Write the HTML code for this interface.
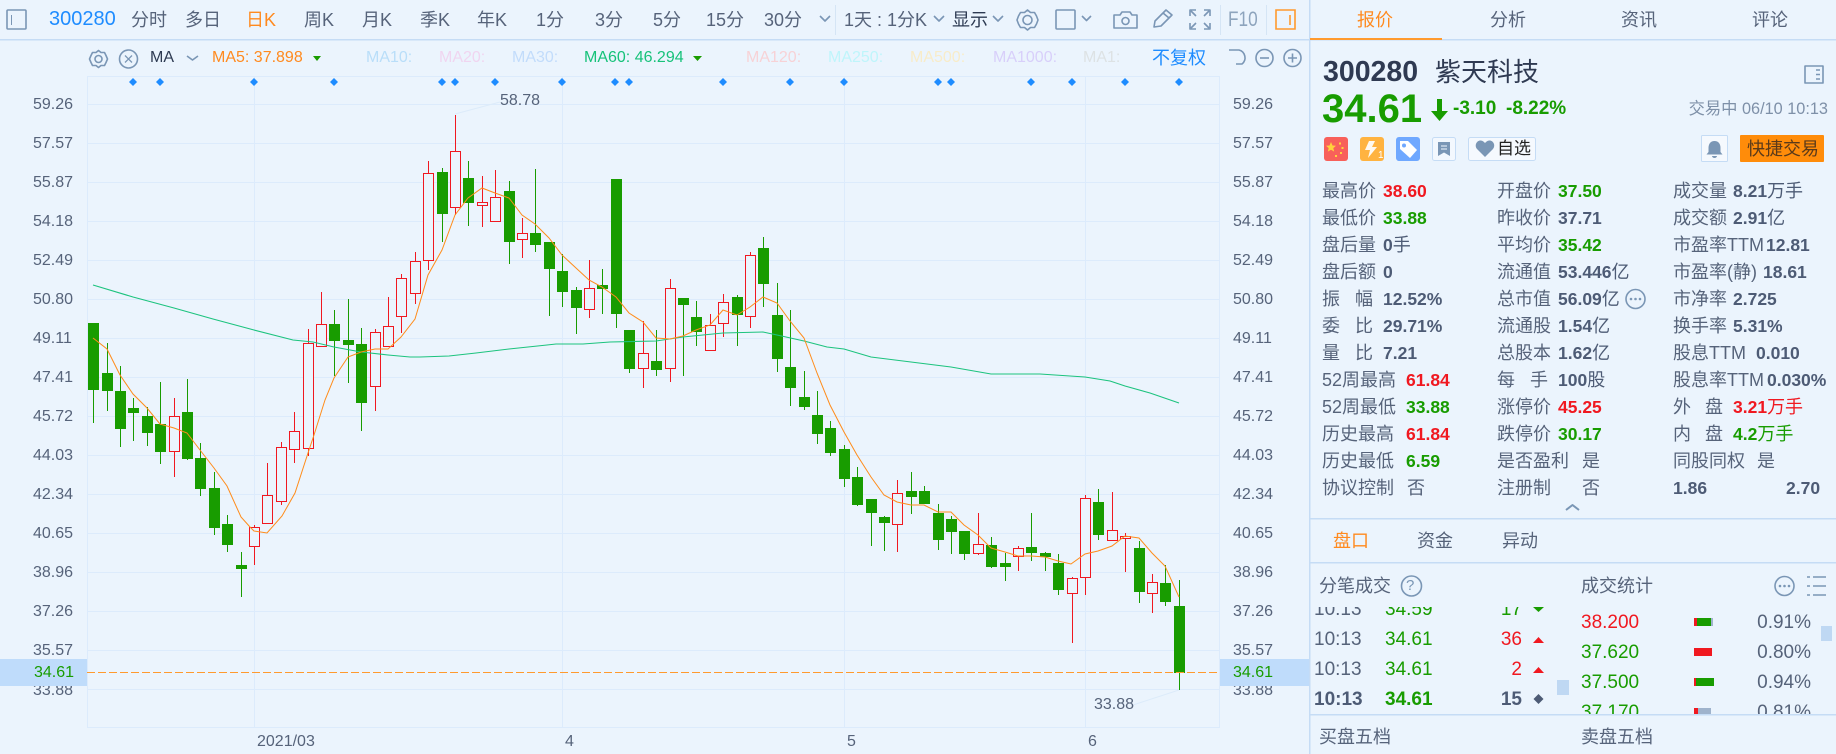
<!DOCTYPE html>
<html lang="zh-CN"><head><meta charset="utf-8"><title>300280 紫天科技</title>
<style>
html,body{margin:0;padding:0;background:#ebf4fd}
#p{position:relative;width:1836px;height:754px;overflow:hidden;background:#ebf4fd;font-family:"Liberation Sans","Noto Sans CJK SC",sans-serif;color:#56637a}
.a{position:absolute;white-space:nowrap;line-height:24px;font-size:18px}
.s{font-size:16px}
.b{font-weight:700;font-size:17.5px}
.g{color:#189c00}.r{color:#f01820}.d{color:#4d5b75}
.n{font-weight:400;font-size:18px}
svg{position:absolute;left:0;top:0}
.t{font-size:19px}
#c{position:absolute;left:0;top:607px;width:1836px;height:107px;overflow:hidden}
#c i{position:absolute;height:8px;display:block}
</style></head><body><div id="p">

<svg width="1836" height="754" viewBox="0 0 1836 754" fill="none" shape-rendering="crispEdges">
<!-- price bands -->
<rect x="0" y="659" width="87" height="27" fill="#bfdcfb"/>
<rect x="1219" y="659" width="90" height="27" fill="#bfdcfb"/>
<!-- structural lines -->
<path d="M0 39.5H1836" stroke="#c5dcf5" stroke-width="1.5"/>
<path d="M1309.5 0V754" stroke="#c5dcf5" stroke-width="1.5"/>
<path d="M1310 39H1442" stroke="#ff9a2e" stroke-width="2"/>
<path d="M1310 518.5H1836M1310 562.5H1836M1310 714.5H1836" stroke="#c5dcf5" stroke-width="1.5"/>
<path d="M835.5 5V35M1220.5 5V35M1266.5 5V35" stroke="#d5e5f5"/>
<!-- grid -->
<path d="M87.5 76.5H1219.5V727.5H87.5ZM87 104.5H1219M87 143.5H1219M87 182.5H1219M87 221.5H1219M87 260.5H1219M87 299.5H1219M87 338.5H1219M87 377.5H1219M87 416.5H1219M87 455.5H1219M87 494.5H1219M87 533.5H1219M87 572.5H1219M87 611.5H1219M87 650.5H1219M87 689.5H1219M254.5 76V727M562.5 76V727M844.5 76V727M1085.5 76V727" stroke="#dcebfc"/>
<!-- green candles -->
<path stroke="#189c00" d="M93.5 323V423M107.5 343V411M120.5 366V447M133.5 398V441M147.5 407V446M160.5 382V464M187.5 379V460M200.5 443V496M214.5 472V535M227.5 515V552M241.5 552V597M334.5 310V376M348.5 299V383M361.5 328V431M442.5 168V242M468.5 161V226M509.5 181V264M535.5 169V252M549.5 242V316M562.5 254V307M576.5 287V334M602.5 269V314M616.5 179V328M629.5 330V373M656.5 330V376M683.5 298V376M696.5 301V346M737.5 295V346M763.5 237V307M777.5 283V372M790.5 310V406M804.5 371V410M817.5 391V444M830.5 421V456M844.5 445V487M857.5 467V506M871.5 499V546M884.5 516V551M911.5 472V514M924.5 486V504M938.5 504V550M951.5 516V554M964.5 531V560M991.5 537V568M1005.5 553V581M1031.5 513V561M1045.5 552V571M1058.5 554V595M1098.5 489V540M1139.5 541V603M1165.5 565V606M1179.5 580V690"/>
<path fill="#189c00" d="M88 323h11V390h-11zM102 373h11V391h-11zM115 391h11V429h-11zM128 408h11V413h-11zM142 416h11V433h-11zM155 424h11V452h-11zM182 412h11V459h-11zM195 458h11V489h-11zM209 488h11V528h-11zM222 524h11V545h-11zM236 565h11V569h-11zM329 324h11V341h-11zM343 340h11V345h-11zM356 344h11V403h-11zM437 172h11V214h-11zM463 178h11V203h-11zM504 191h11V242h-11zM530 233h11V245h-11zM544 242h11V269h-11zM557 271h11V292h-11zM571 290h11V308h-11zM597 285h11V289h-11zM611 179h11V314h-11zM624 330h11V369h-11zM651 361h11V370h-11zM678 298h11V305h-11zM691 317h11V332h-11zM732 297h11V315h-11zM758 248h11V284h-11zM772 315h11V359h-11zM785 367h11V388h-11zM799 397h11V407h-11zM812 415h11V434h-11zM825 428h11V453h-11zM839 449h11V479h-11zM852 477h11V505h-11zM866 499h11V513h-11zM879 517h11V523h-11zM906 491h11V497h-11zM919 491h11V504h-11zM933 513h11V540h-11zM946 519h11V532h-11zM959 531h11V554h-11zM986 545h11V567h-11zM1000 563h11V567h-11zM1026 547h11V553h-11zM1040 553h11V557h-11zM1053 563h11V590h-11zM1093 502h11V535h-11zM1134 548h11V592h-11zM1160 583h11V602h-11zM1174 606h11V673h-11z"/>
<!-- red candles -->
<path stroke="#f01820" d="M174.5 398V477M254.5 525V565M267.5 463V524M281.5 442V505M294.5 412V463M308.5 329V456M321.5 292V347M375.5 329V411M388.5 297V347M401.5 274V333M415.5 252V304M428.5 161V270M455.5 115V215M482.5 176V227M495.5 170V222M522.5 218V258M589.5 260V318M643.5 321V388M670.5 279V382M710.5 314V351M723.5 294V337M750.5 252V328M897.5 480V552M978.5 513V555M1018.5 546V571M1072.5 577V643M1085.5 495V595M1112.5 492V541M1125.5 533V572M1152.5 574V613"/>
<path stroke="#f01820" fill="#ebf4fd" d="M169.5 416.5h10V451.5h-10zM249.5 527.5h10V546.5h-10zM262.5 495.5h10V523.5h-10zM276.5 447.5h10V501.5h-10zM289.5 431.5h10V449.5h-10zM303.5 343.5h10V448.5h-10zM316.5 324.5h10V346.5h-10zM370.5 332.5h10V386.5h-10zM383.5 326.5h10V346.5h-10zM396.5 278.5h10V316.5h-10zM410.5 261.5h10V293.5h-10zM423.5 173.5h10V260.5h-10zM450.5 151.5h10V207.5h-10zM477.5 202.5h10V205.5h-10zM490.5 197.5h10V221.5h-10zM517.5 233.5h10V239.5h-10zM584.5 288.5h10V309.5h-10zM638.5 353.5h10V368.5h-10zM665.5 288.5h10V368.5h-10zM705.5 325.5h10V350.5h-10zM718.5 302.5h10V323.5h-10zM745.5 255.5h10V316.5h-10zM892.5 493.5h10V524.5h-10zM973.5 544.5h10V553.5h-10zM1013.5 548.5h10V556.5h-10zM1067.5 578.5h10V593.5h-10zM1080.5 498.5h10V577.5h-10zM1107.5 530.5h10V540.5h-10zM1120.5 536.5h10V538.5h-10zM1147.5 582.5h10V593.5h-10z"/>
<!-- dashed last price -->
<path d="M87 672.5H1219" stroke="#ff9a2e" stroke-dasharray="8 3"/>
</svg>

<svg width="1836" height="754" viewBox="0 0 1836 754" fill="none">
<!-- MA60 -->
<path stroke="#1cc37e" stroke-width="1.1" d="M93 285L133 297L174 308L213 319L254 330L293 340L313 342L334 347L361 352L388 355L410 357L420 357L449 356L476 353L509 349L547 345L556 344L583 344L610 342L656 341L683 337L723 333L763 332L777 335L804 341L827 347L844 349L871 357L911 362L951 367L991 374L1000 374L1040 374L1085 377L1110 381L1125 386L1150 393L1179 403"/>
<!-- MA5 -->
<path stroke="#ff8c1a" stroke-width="1" d="M93 338L107 349L120 375L133 394L147 408L160 424L174 428L187 433L200 450L214 468L227 486L241 517L250 527L254 531L267 533L282 516L295 493L308 453L314 435L325 400L334 378L348 357L361 352L375 349L388 349L401 337L415 319L428 275L442 250L455 215L468 198L482 188L495 193L509 198L522 215L535 224L549 238L562 255L576 268L589 280L602 287L616 297L629 313L643 322L656 338L670 339L683 336L696 330L710 325L723 310L737 315L750 307L763 297L777 303L790 321L804 338L817 373L830 405L844 432L857 455L871 477L884 495L897 502L911 505L924 505L938 512L951 512L964 525L978 535L991 548L1005 552L1018 556L1031 556L1045 557L1058 561L1071 564L1085 554L1098 551L1112 546L1125 536L1139 538L1152 553L1165 566L1179 597"/>
<!-- leaders -->
<path stroke="#dcebfa" d="M455 114L500 102M1133 705L1179 690"/>
<!-- diamonds -->
<path fill="#1e8cff" d="M133 78l4 4-4 4-4-4zM160 78l4 4-4 4-4-4zM254 78l4 4-4 4-4-4zM334 78l4 4-4 4-4-4zM442 78l4 4-4 4-4-4zM455 78l4 4-4 4-4-4zM495 78l4 4-4 4-4-4zM562 78l4 4-4 4-4-4zM615 78l4 4-4 4-4-4zM629 78l4 4-4 4-4-4zM723 78l4 4-4 4-4-4zM790 78l4 4-4 4-4-4zM844 78l4 4-4 4-4-4zM938 78l4 4-4 4-4-4zM951 78l4 4-4 4-4-4zM1031 78l4 4-4 4-4-4zM1072 78l4 4-4 4-4-4zM1125 78l4 4-4 4-4-4zM1179 78l4 4-4 4-4-4z"/>

<!-- toolbar icons -->
<g stroke="#7a96b5" stroke-width="1.6" stroke-linejoin="round">
<rect x="7" y="10" width="19" height="19" rx="1"/><path stroke-width="1" d="M11.5 15V25"/>
<path d="M820 16l5 5 5-5M934 16l5 5 5-5M993 16l5 5 5-5M1082 16l4.500 4.500 4.500-4.500M187 56l5.500 4 5.500-4"/>
<!-- gear top -->
<path d="M1027.500 10l3 2.500 4 0 2 3.500 1.500 4-1.500 4-2 3.500-4 0-3 2.500-3-2.500-4 0-2-3.500-1.500-4 1.500-4 2-3.500 4 0z"/><circle cx="1027.500" cy="20" r="4.500"/>
<rect x="1056" y="10" width="19" height="19" rx="1"/>
<!-- camera -->
<path d="M1114 15h6l2-3h8l2 3h5v13h-23z"/><circle cx="1125.500" cy="21" r="3.500"/>
<!-- pencil -->
<path d="M1154 27l1-6 11-11 6 5-11 11zM1163 13l6 5"/>
<!-- fullscreen -->
<path d="M1190 16v-6h6M1210 16v-6h-6M1190 23v6h6M1210 23v6h-6M1191 11l5 5M1209 11l-5 5M1191 28l5-5M1209 28l-5-5"/>
<!-- row 2 left icons -->
<path d="M98.500 50.500l2.500 2 3.500 0 1.500 3 1.500 3.500-1.500 3.500-1.500 3-3.500 0-2.500 2-2.500-2-3.500 0-1.500-3-1.500-3.500 1.500-3.500 1.500-3 3.500 0z"/><circle cx="98.500" cy="59" r="3.500"/>
<circle cx="128.500" cy="59" r="9"/><path stroke-width="1.3" d="M125 55.500l7 7M132 55.500l-7 7"/>
<!-- undo, minus, plus -->
<path d="M1229 50h10a8 8 0 0 1 3 14h-6"/>
<circle cx="1264.500" cy="58" r="8.500"/><path d="M1260 58h9"/>
<circle cx="1292.500" cy="58" r="8.500"/><path d="M1288 58h9M1292.500 53.500v9"/>
<!-- panel icon -->
<rect x="1805" y="66" width="18" height="17"/><path d="M1816 70h4M1816 74.500h4M1816 79h4"/>
<!-- ellipsis circles -->
<circle cx="1635.500" cy="299" r="9.500"/>
<circle cx="1784.500" cy="586" r="9.500"/>
<circle cx="1411.500" cy="586" r="10"/>
<!-- list icon -->
<path d="M1807 577h3M1813 577h13M1807 586h3M1813 586h13M1807 595h3M1813 595h13"/>
<!-- up chevron -->
<path stroke-width="2" d="M1566 510l6.500-5 6.500 5"/>
</g>
<path stroke="#ff9a2e" stroke-width="1.6" d="M1276 10h19v19h-19zM1290 15v10"/>
<path fill="#1a9c00" d="M313 56h8l-4 5zM693 56h9l-4.500 5z"/>
<g fill="#7a96b5"><circle cx="1631" cy="299" r="1.300"/><circle cx="1635.500" cy="299" r="1.300"/><circle cx="1640" cy="299" r="1.300"/><circle cx="1780" cy="586" r="1.300"/><circle cx="1784.500" cy="586" r="1.300"/><circle cx="1789" cy="586" r="1.300"/></g>

<!-- price arrow -->
<path fill="#189c00" d="M1437 99h5v12h6l-8.500 10-8.500-10h6z"/>

<!-- badges -->
<rect x="1324" y="137" width="24" height="24" rx="3" fill="#f8605a"/>
<path fill="#ffd23c" d="M1331 142l1.500 3.500 3.500.3-2.700 2.300.9 3.500-3.200-1.900-3.200 1.900.9-3.500-2.700-2.300 3.500-.3zM1339 142.500h2v2h-2zM1341.500 147h2v2h-2zM1340 152h2v2h-2zM1335 155h2v2h-2z"/>
<rect x="1360" y="137" width="24" height="24" rx="3" fill="#ffb340"/>
<path fill="#fff" d="M1369 141h6l-3 6h5l-9 11 2-8h-5z" opacity=".92"/>
<rect x="1396" y="137" width="24" height="24" rx="3" fill="#6fa8ff"/>
<path fill="#fff" d="M1400 141h8l9 9-7 8-10-9z"/><circle cx="1404" cy="145.500" r="2" fill="#6fa8ff"/>
<rect x="1432.500" y="137.500" width="23" height="23" rx="2" stroke="#c5dcf5" fill="#f3f8fe"/>
<path fill="#7a96b5" d="M1438 142h12v14l-6-3.500-6 3.500z"/><path stroke="#f3f8fe" d="M1441 146h6M1441 149h6"/>
<rect x="1468.500" y="137.500" width="67" height="23" rx="2" stroke="#c5dcf5" fill="#f5f9fe"/>
<path fill="#7a96b5" d="M1485 157l-8-8c-3-4 0-9 4-8.500 2 .2 3 1.500 4 2.500 1-1 2-2.300 4-2.500 4-.5 7 4.500 4 8.500z"/>
<rect x="1701.500" y="135.500" width="26" height="26" rx="1" stroke="#c5dcf5" fill="#f5f9fe"/>
<path fill="#7a96b5" d="M1714.500 141c4 0 6 3 6 7v4l2 2.500h-16l2-2.500v-4c0-4 2-7 6-7zM1712 156h5a2.500 2 0 0 1-5 0z"/>
<rect x="1740" y="135" width="84" height="27" rx="1" fill="#ff8c0a"/>
<!-- scroll thumbs -->
<rect x="1557" y="680" width="12" height="15" fill="#bfd8f3"/>
<rect x="1821" y="626" width="11" height="15" fill="#bfd8f3"/>
</svg>

<!-- top tabs -->
<span class="a" style="left:49px;top:7px;font-size:20px;color:#1e8cff">300280</span>
<span class="a" style="left:131px;top:8px">分时</span>
<span class="a" style="left:185px;top:8px">多日</span>
<span class="a" style="left:246px;top:8px;color:#ff8a1f">日K</span>
<span class="a" style="left:304px;top:8px">周K</span>
<span class="a" style="left:362px;top:8px">月K</span>
<span class="a" style="left:420px;top:8px">季K</span>
<span class="a" style="left:477px;top:8px">年K</span>
<span class="a" style="left:536px;top:8px">1分</span>
<span class="a" style="left:595px;top:8px">3分</span>
<span class="a" style="left:653px;top:8px">5分</span>
<span class="a" style="left:706px;top:8px">15分</span>
<span class="a" style="left:764px;top:8px">30分</span>
<span class="a" style="left:844px;top:8px">1天 : 1分K</span>
<span class="a" style="left:952px;top:8px;color:#2d3a52">显示</span>
<span class="a" style="left:1228px;top:8px;font-size:21px;color:#8da4bd;transform:scaleX(.82);transform-origin:left">F10</span>
<span class="a" style="left:1378px;top:150px;font-size:10px;line-height:12px;color:#fff">1</span>

<!-- MA row -->
<span class="a s" style="left:150px;top:46px;color:#2d3a52">MA</span>
<span class="a s" style="left:212px;top:46px;color:#ff8a1f">MA5:&nbsp;37.898</span>
<span class="a s" style="left:366px;top:46px;color:#b9def9">MA10:</span>
<span class="a s" style="left:439px;top:46px;color:#f0d5f0">MA20:</span>
<span class="a s" style="left:512px;top:46px;color:#c2dcfb">MA30:</span>
<span class="a s" style="left:584px;top:46px;color:#17c27a">MA60:&nbsp;46.294</span>
<span class="a s" style="left:746px;top:46px;color:#f7d2d6">MA120:</span>
<span class="a s" style="left:828px;top:46px;color:#bff5fb">MA250:</span>
<span class="a s" style="left:910px;top:46px;color:#f8ecc9">MA500:</span>
<span class="a s" style="left:993px;top:46px;color:#d8cffa">MA1000:</span>
<span class="a s" style="left:1083px;top:46px;color:#dde2e4">MA1:</span>
<span class="a" style="left:1152px;top:46px;color:#1e8cff">不复权</span>

<!-- left axis -->
<span class="a s" style="left:33px;top:93px">59.26</span><span class="a s" style="left:33px;top:132px">57.57</span><span class="a s" style="left:33px;top:171px">55.87</span><span class="a s" style="left:33px;top:210px">54.18</span><span class="a s" style="left:33px;top:249px">52.49</span><span class="a s" style="left:33px;top:288px">50.80</span><span class="a s" style="left:33px;top:327px">49.11</span><span class="a s" style="left:33px;top:366px">47.41</span><span class="a s" style="left:33px;top:405px">45.72</span><span class="a s" style="left:33px;top:444px">44.03</span><span class="a s" style="left:33px;top:483px">42.34</span><span class="a s" style="left:33px;top:522px">40.65</span><span class="a s" style="left:33px;top:561px">38.96</span><span class="a s" style="left:33px;top:600px">37.26</span><span class="a s" style="left:33px;top:639px">35.57</span>
<div style="position:absolute;left:0;top:686px;width:87px;height:20px;overflow:hidden"><span class="a s" style="left:33px;top:-7px">33.88</span></div>
<span class="a s g" style="left:34px;top:661px">34.61</span>

<!-- right axis -->
<span class="a s" style="left:1233px;top:93px">59.26</span><span class="a s" style="left:1233px;top:132px">57.57</span><span class="a s" style="left:1233px;top:171px">55.87</span><span class="a s" style="left:1233px;top:210px">54.18</span><span class="a s" style="left:1233px;top:249px">52.49</span><span class="a s" style="left:1233px;top:288px">50.80</span><span class="a s" style="left:1233px;top:327px">49.11</span><span class="a s" style="left:1233px;top:366px">47.41</span><span class="a s" style="left:1233px;top:405px">45.72</span><span class="a s" style="left:1233px;top:444px">44.03</span><span class="a s" style="left:1233px;top:483px">42.34</span><span class="a s" style="left:1233px;top:522px">40.65</span><span class="a s" style="left:1233px;top:561px">38.96</span><span class="a s" style="left:1233px;top:600px">37.26</span><span class="a s" style="left:1233px;top:639px">35.57</span>
<div style="position:absolute;left:1219px;top:686px;width:90px;height:20px;overflow:hidden"><span class="a s" style="left:14px;top:-7px">33.88</span></div>
<span class="a s g" style="left:1233px;top:661px">34.61</span>

<!-- chart labels -->
<span class="a s" style="left:500px;top:89px">58.78</span>
<span class="a s" style="left:1094px;top:693px">33.88</span>
<span class="a s" style="left:257px;top:730px">2021/03</span>
<span class="a s" style="left:565px;top:730px">4</span>
<span class="a s" style="left:847px;top:730px">5</span>
<span class="a s" style="left:1088px;top:730px">6</span>

<!-- right tabs -->
<span class="a" style="left:1357px;top:8px;color:#ff8a1f">报价</span>
<span class="a" style="left:1490px;top:8px">分析</span>
<span class="a" style="left:1621px;top:8px">资讯</span>
<span class="a" style="left:1752px;top:8px">评论</span>

<!-- header -->
<span class="a" style="left:1323px;top:56px;font-size:28.500px;font-weight:700;line-height:32px;color:#2f3a52">300280</span>
<span class="a" style="left:1435px;top:56px;font-size:26px;line-height:32px;color:#2f3a52">紫天科技</span>
<span class="a g" style="left:1322px;top:86px;font-size:40px;font-weight:700;line-height:46px">34.61</span>
<span class="a g" style="left:1453px;top:97px;font-size:19px;font-weight:700">-3.10</span>
<span class="a g" style="left:1506px;top:97px;font-size:19px;font-weight:700">-8.22%</span>
<span class="a s" style="right:8px;top:97px;font-size:16.300px;color:#7e90a8">交易中 06/10 10:13</span>
<span class="a" style="left:1497px;top:137px;font-size:17px;color:#222">自选</span>
<span class="a" style="left:1747px;top:137px;color:#5a3a1a">快捷交易</span>

<!-- data col 1 -->
<span class="a" style="left:1322px;top:179px">最高价</span><span class="a b r" style="left:1383px;top:179px">38.60</span>
<span class="a" style="left:1322px;top:206px">最低价</span><span class="a b g" style="left:1383px;top:206px">33.88</span>
<span class="a" style="left:1322px;top:233px">盘后量</span><span class="a b d" style="left:1383px;top:233px">0<span class="n">手</span></span>
<span class="a" style="left:1322px;top:260px">盘后额</span><span class="a b d" style="left:1383px;top:260px">0</span>
<span class="a" style="left:1322px;top:287px">振</span><span class="a" style="left:1355px;top:287px">幅</span><span class="a b d" style="left:1383px;top:287px">12.52%</span>
<span class="a" style="left:1322px;top:314px">委</span><span class="a" style="left:1355px;top:314px">比</span><span class="a b d" style="left:1383px;top:314px">29.71%</span>
<span class="a" style="left:1322px;top:341px">量</span><span class="a" style="left:1355px;top:341px">比</span><span class="a b d" style="left:1383px;top:341px">7.21</span>
<span class="a" style="left:1322px;top:368px">52周最高</span><span class="a b r" style="left:1406px;top:368px">61.84</span>
<span class="a" style="left:1322px;top:395px">52周最低</span><span class="a b g" style="left:1406px;top:395px">33.88</span>
<span class="a" style="left:1322px;top:422px">历史最高</span><span class="a b r" style="left:1406px;top:422px">61.84</span>
<span class="a" style="left:1322px;top:449px">历史最低</span><span class="a b g" style="left:1406px;top:449px">6.59</span>
<span class="a" style="left:1322px;top:476px">协议控制</span><span class="a" style="left:1407px;top:476px">否</span>

<!-- data col 2 -->
<span class="a" style="left:1497px;top:179px">开盘价</span><span class="a b g" style="left:1558px;top:179px">37.50</span>
<span class="a" style="left:1497px;top:206px">昨收价</span><span class="a b d" style="left:1558px;top:206px">37.71</span>
<span class="a" style="left:1497px;top:233px">平均价</span><span class="a b g" style="left:1558px;top:233px">35.42</span>
<span class="a" style="left:1497px;top:260px">流通值</span><span class="a b d" style="left:1558px;top:260px">53.446<span class="n">亿</span></span>
<span class="a" style="left:1497px;top:287px">总市值</span><span class="a b d" style="left:1558px;top:287px">56.09<span class="n">亿</span></span>
<span class="a" style="left:1497px;top:314px">流通股</span><span class="a b d" style="left:1558px;top:314px">1.54<span class="n">亿</span></span>
<span class="a" style="left:1497px;top:341px">总股本</span><span class="a b d" style="left:1558px;top:341px">1.62<span class="n">亿</span></span>
<span class="a" style="left:1497px;top:368px">每</span><span class="a" style="left:1530px;top:368px">手</span><span class="a b d" style="left:1558px;top:368px">100<span class="n">股</span></span>
<span class="a" style="left:1497px;top:395px">涨停价</span><span class="a b r" style="left:1558px;top:395px">45.25</span>
<span class="a" style="left:1497px;top:422px">跌停价</span><span class="a b g" style="left:1558px;top:422px">30.17</span>
<span class="a" style="left:1497px;top:449px">是否盈利</span><span class="a" style="left:1582px;top:449px">是</span>
<span class="a" style="left:1497px;top:476px">注册制</span><span class="a" style="left:1582px;top:476px">否</span>

<!-- data col 3 -->
<span class="a" style="left:1673px;top:179px">成交量</span><span class="a b d" style="left:1733px;top:179px">8.21<span class="n">万手</span></span>
<span class="a" style="left:1673px;top:206px">成交额</span><span class="a b d" style="left:1733px;top:206px">2.91<span class="n">亿</span></span>
<span class="a" style="left:1673px;top:233px">市盈率TTM</span><span class="a b d" style="left:1766px;top:233px">12.81</span>
<span class="a" style="left:1673px;top:260px">市盈率(静)</span><span class="a b d" style="left:1763px;top:260px">18.61</span>
<span class="a" style="left:1673px;top:287px">市净率</span><span class="a b d" style="left:1733px;top:287px">2.725</span>
<span class="a" style="left:1673px;top:314px">换手率</span><span class="a b d" style="left:1733px;top:314px">5.31%</span>
<span class="a" style="left:1673px;top:341px">股息TTM</span><span class="a b d" style="left:1756px;top:341px">0.010</span>
<span class="a" style="left:1673px;top:368px">股息率TTM</span><span class="a b d" style="left:1767px;top:368px">0.030%</span>
<span class="a" style="left:1673px;top:395px">外</span><span class="a" style="left:1705px;top:395px">盘</span><span class="a b r" style="left:1733px;top:395px">3.21<span class="n">万手</span></span>
<span class="a" style="left:1673px;top:422px">内</span><span class="a" style="left:1705px;top:422px">盘</span><span class="a b g" style="left:1733px;top:422px">4.2<span class="n">万手</span></span>
<span class="a" style="left:1673px;top:449px">同股同权</span><span class="a" style="left:1757px;top:449px">是</span>
<span class="a b d" style="left:1673px;top:476px">1.86</span><span class="a b d" style="left:1786px;top:476px">2.70</span>

<!-- lower tabs -->
<span class="a" style="left:1333px;top:529px;color:#ff8a1f">盘口</span>
<span class="a" style="left:1417px;top:529px">资金</span>
<span class="a" style="left:1502px;top:529px">异动</span>
<span class="a" style="left:1319px;top:574px">分笔成交</span>
<span class="a" style="left:1406px;top:574px;font-size:15px;color:#7a96b5">?</span>
<span class="a" style="left:1581px;top:574px">成交统计</span>

<!-- ticks -->
<div id="c">
<span class="a t" style="left:1314px;top:-9px">10:13</span><span class="a t g" style="left:1385px;top:-9px">34.59</span><span class="a t g" style="right:314px;top:-9px">17</span>
<span class="a t" style="left:1314px;top:21px">10:13</span><span class="a t g" style="left:1385px;top:21px">34.61</span><span class="a t r" style="right:314px;top:21px">36</span>
<span class="a t" style="left:1314px;top:51px">10:13</span><span class="a t g" style="left:1385px;top:51px">34.61</span><span class="a t r" style="right:314px;top:51px">2</span>
<span class="a t d" style="left:1314px;top:81px;font-weight:700">10:13</span><span class="a t g" style="left:1385px;top:81px;font-weight:700">34.61</span><span class="a t d" style="right:314px;top:81px;font-weight:700">15</span>
<svg width="1836" height="107" style="left:0;top:0"><path fill="#189c00" d="M1533 0h11l-5.500 5z"/><path fill="#f01820" d="M1533 36l5.500-6 5.500 6zM1533 66l5.500-6 5.500 6z"/><path fill="#4d5b75" d="M1538.500 87l5 5-5 5-5-5z"/></svg>
<span class="a t r" style="left:1581px;top:4px">38.200</span><span class="a t" style="right:25px;top:4px">0.91%</span>
<span class="a t g" style="left:1581px;top:34px">37.620</span><span class="a t" style="right:25px;top:34px">0.80%</span>
<span class="a t g" style="left:1581px;top:64px">37.500</span><span class="a t" style="right:25px;top:64px">0.94%</span>
<span class="a t g" style="left:1581px;top:94px">37.170</span><span class="a t" style="right:25px;top:94px">0.81%</span>
<i style="left:1694px;top:11px;width:3px;background:#f01820"></i><i style="left:1697px;top:11px;width:14px;background:#189c00"></i><i style="left:1711px;top:11px;width:2px;background:#9fb3cc"></i>
<i style="left:1694px;top:41px;width:18px;background:#f01820"></i>
<i style="left:1694px;top:71px;width:2px;background:#f01820"></i><i style="left:1696px;top:71px;width:18px;background:#189c00"></i>
<i style="left:1694px;top:101px;width:4px;background:#f01820"></i><i style="left:1698px;top:101px;width:13px;background:#9fb3cc"></i>
</div>

<span class="a" style="left:1319px;top:725px">买盘五档</span>
<span class="a" style="left:1581px;top:725px">卖盘五档</span>

</div></body></html>
